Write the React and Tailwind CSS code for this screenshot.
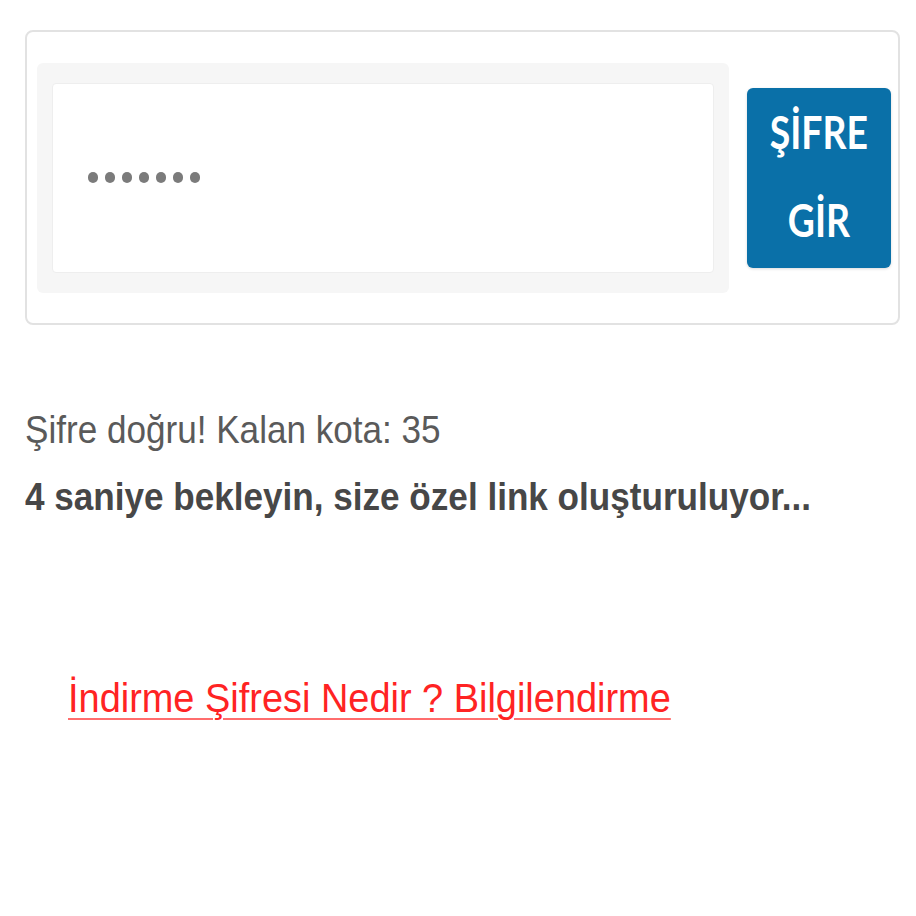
import React from "react";

const App = () => {
  const dots = [0, 1, 2, 3, 4, 5, 6];

  return (
    <div className="min-h-[916px] w-[916px] bg-white font-['Liberation_Sans',Arial,sans-serif]">
      <div className="pt-[30px] pl-[25px]">
        {/* password card */}
        <div className="flex h-[295px] w-[875px] items-center rounded-[8px] border-2 border-[#e2e2e2] pl-[10px] pr-[7px]">
          <div className="h-[230px] w-[693px] rounded-[6px] bg-[#f6f6f6] px-[15px] py-[20px]">
            <div className="flex h-full items-center gap-[7px] rounded-[4px] border border-[#eeeeee] bg-white pl-[35px]">
              {dots.map((d) => (
                <span key={d} className="h-[11px] w-[10px] rounded-full bg-[#7b7b7b]" />
              ))}
            </div>
          </div>
          <button className="ml-[18px] h-[180px] w-[144px] rounded-[6px] bg-[#0a70a8] pb-[5px] font-['Lato',sans-serif] text-[45px] font-bold leading-[88px] text-white shadow-[0_1px_3px_rgba(0,0,0,0.15)]">
            <span className="block scale-x-[0.83]">ŞİFRE</span>
            <span className="block scale-x-[0.83]">GİR</span>
          </button>
        </div>

        {/* status */}
        <div className="mt-[82px] origin-left scale-x-90 text-[39px] leading-[45px] text-[#5a5a5a]">
          Şifre doğru! Kalan kota: 35
        </div>
        <div className="mt-[22px] origin-left scale-x-90 text-[39px] font-bold leading-[45px] text-[#474747]">
          4 saniye bekleyin, size özel link oluşturuluyor...
        </div>

        <div className="mt-[156px] pl-[43px]">
          <a
            href="#"
            className="inline-block origin-left scale-x-[0.925] text-[41px] leading-[47px] text-[#ff2323] underline decoration-[#ff6d6d] decoration-2 underline-offset-[6px]"
          >
            İndirme Şifresi Nedir ? Bilgilendirme
          </a>
        </div>
      </div>
    </div>
  );
};

export default App;
